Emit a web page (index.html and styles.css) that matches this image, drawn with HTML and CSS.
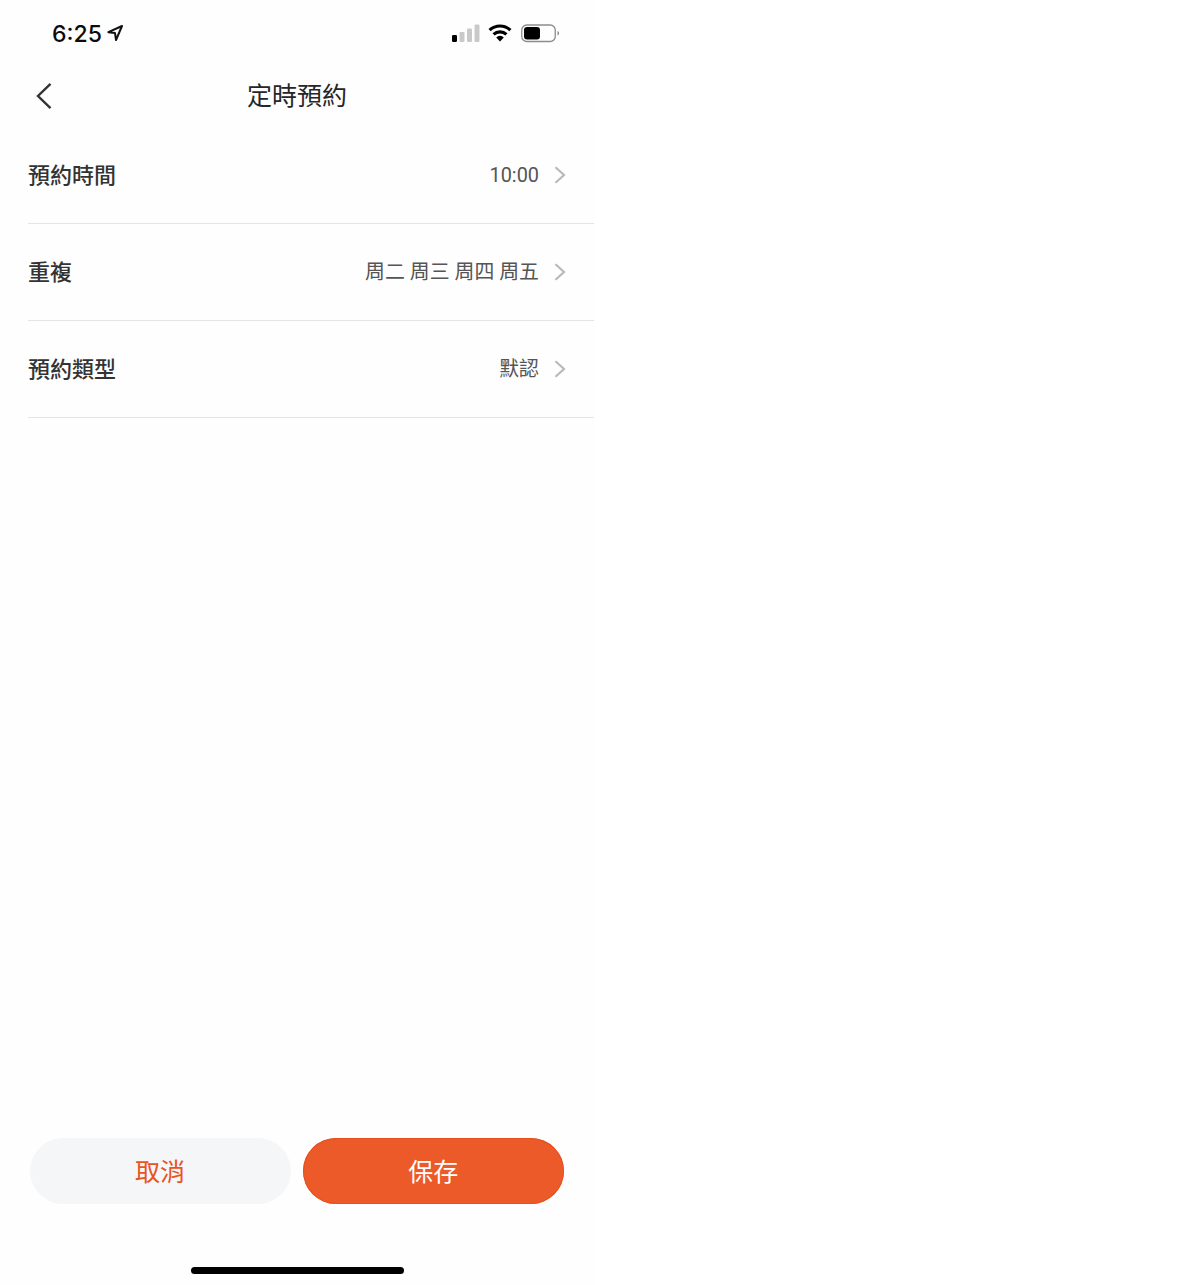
FILE: index.html
```html
<!DOCTYPE html>
<html lang="zh-Hant">
<head>
<meta charset="utf-8">
<title>定時預約</title>
<link rel="stylesheet" href="styles.css">
</head>
<body>
<main class="phone">
  <header class="status">
    <div class="clock">
      <span class="time">6:25</span>
      <svg class="loc" width="16" height="16" viewBox="0 0 16 16"><path d="M15 1 1.4 7.2 8 8.1 9 15Z" fill="none" stroke="#111" stroke-width="2" stroke-linejoin="round"/></svg>
    </div>
    <div class="indicators">
      <svg class="signal" width="28" height="18" viewBox="0 0 28 18">
        <rect x="0" y="11" width="5" height="7" rx="1.2" fill="#000"/>
        <rect x="7.5" y="8" width="5" height="10" rx="1.2" fill="#c9c9c9"/>
        <rect x="15" y="4.5" width="5" height="13.5" rx="1.2" fill="#c9c9c9"/>
        <rect x="22.5" y="0.5" width="5" height="17.5" rx="1.2" fill="#c9c9c9"/>
      </svg>
      <svg class="wifi" width="24" height="18" viewBox="0 0 24 18">
        <path d="M1.6 6.2A15 15 0 0 1 22.4 6.2" fill="none" stroke="#000" stroke-width="3.2"/>
        <path d="M5.6 10.4A9.3 9.3 0 0 1 18.4 10.4" fill="none" stroke="#000" stroke-width="3.2"/>
        <path d="M8.2 13.4 12 17.6 15.8 13.4A5.3 5.3 0 0 0 8.2 13.4Z" fill="#000"/>
      </svg>
      <svg class="battery" width="39" height="19" viewBox="0 0 39 19">
        <rect x="0.75" y="1" width="33.5" height="16.5" rx="5" fill="none" stroke="#8c8c8c" stroke-width="1.3"/>
        <rect x="3" y="3" width="16" height="12.5" rx="3" fill="#000"/>
        <path d="M36.5 7v4.6a2.4 2.4 0 0 0 1.6-2.3 2.4 2.4 0 0 0-1.6-2.3Z" fill="#8c8c8c"/>
      </svg>
    </div>
  </header>

  <nav class="navbar">
    <svg class="back" width="16" height="28" viewBox="0 0 16 28"><path d="M14.5 1.8 2 14 14.5 26.2" fill="none" stroke="#333" stroke-width="2.4"/></svg>
    <h1 class="title">定時預約</h1>
  </nav>

  <section class="list">
    <div class="row">
      <span class="label">預約時間</span>
      <span class="value">10:00</span>
      <svg class="chev" width="12" height="18" viewBox="0 0 12 18"><path d="M1.5 1.2 10 9 1.5 16.8" fill="none" stroke="#b9b9b9" stroke-width="2.2"/></svg>
    </div>
    <div class="row">
      <span class="label">重複</span>
      <span class="value">周二 周三 周四 周五</span>
      <svg class="chev" width="12" height="18" viewBox="0 0 12 18"><path d="M1.5 1.2 10 9 1.5 16.8" fill="none" stroke="#b9b9b9" stroke-width="2.2"/></svg>
    </div>
    <div class="row">
      <span class="label">預約類型</span>
      <span class="value">默認</span>
      <svg class="chev" width="12" height="18" viewBox="0 0 12 18"><path d="M1.5 1.2 10 9 1.5 16.8" fill="none" stroke="#b9b9b9" stroke-width="2.2"/></svg>
    </div>
  </section>

  <footer class="actions">
    <button class="btn btn-cancel" type="button">取消</button>
    <button class="btn btn-save" type="button">保存</button>
  </footer>
  <div class="home-wrap"><div class="home"></div></div>
</main>
</body>
</html>
```

FILE: styles.css
```css
* { box-sizing: border-box; }
html, body { margin: 0; padding: 0; background: #fff; }
body { font-family: "Noto Sans CJK TC", "Noto Sans", sans-serif; height: 1285px; overflow: hidden; }
.phone { width: 594px; height: 1285px; display: flex; flex-direction: column; background: #fefefe; }
.status { height: 66px; display: flex; align-items: center; justify-content: space-between; padding: 0 34px 0 52px; }
.clock { display: flex; align-items: center; gap: 5px; }
.time { font-family: Inter, Roboto, sans-serif; font-size: 23px; font-weight: 500; color: #0c0c0c; line-height: 30px; padding-top: 1px; }
.indicators { display: flex; align-items: center; gap: 8px; }
.wifi { margin-right: 1px; }
.navbar { height: 61px; display: grid; grid-template-columns: 1fr auto 1fr; align-items: center; padding: 0 36px; }
.back { display: block; margin-top: -1px; }
.title { margin: 0 0 5px; font-size: 25px; font-weight: 400; color: #262626; line-height: 36px; }
.list { display: flex; flex-direction: column; margin-left: 28px; }
.row { height: 97px; display: flex; align-items: center; border-bottom: 1px solid #e4e4e4; padding-right: 28px; }
.label { flex: 1; font-size: 22px; font-weight: 500; color: #333; line-height: 30px; padding-bottom: 4px; }
.value { font-size: 19.9px; color: #555; line-height: 30px; font-family: Roboto, "Noto Sans CJK TC", sans-serif; padding-top: 2px; }
.chev { margin-left: 15px; display: block; }
.actions { margin-top: auto; display: flex; gap: 12px; padding: 0 30px 0 29.5px; }
.btn { flex: 1; height: 66px; border: 0; border-radius: 33px; font-family: inherit; font-size: 25px; padding: 0 0 3px; }
.btn-cancel { background: #f5f6f8; color: #e8541f; }
.btn-save { background: #eb5a28; color: #fff; box-shadow: inset 0 0 0 1px #e84f1c; }
.home-wrap { height: 81px; display: flex; justify-content: center; padding-top: 63px; }
.home { width: 213px; height: 7px; border-radius: 4px; background: #000; }
```
